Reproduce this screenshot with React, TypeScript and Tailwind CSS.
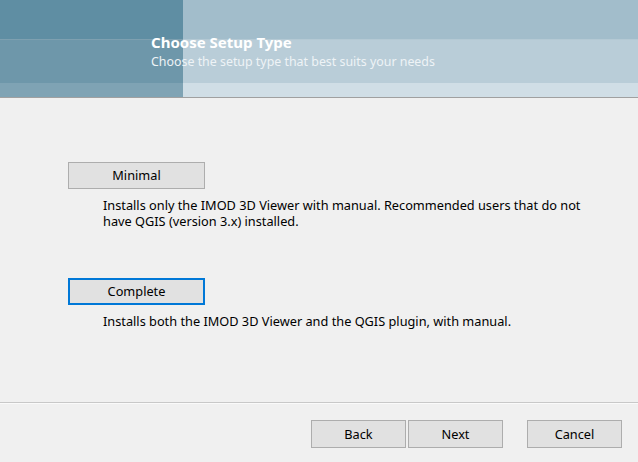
import React from 'react';

const font = { fontFamily: '"Noto Sans", "Open Sans", Arial, sans-serif' };

const App: React.FC = () => {
  return (
    <div
      className="w-[638px] h-[462px] bg-[#f0f0f0] flex flex-col overflow-hidden select-none text-black"
      style={font}
    >
      {/* Header banner */}
      <div className="relative h-[97px] flex shrink-0">
        <div className="w-[183px] flex flex-col">
          <div className="h-[39px] bg-[#5f8ea3]" />
          <div className="h-[1px] bg-[#7ea0b0]" />
          <div className="h-[43px] bg-[#6e97aa]" />
          <div className="h-[14px] bg-[#7fa3b4]" />
        </div>
        <div className="flex-1 flex flex-col">
          <div className="h-[39px] bg-[#a2bdcb]" />
          <div className="h-[1px] bg-[#b4c9d4]" />
          <div className="h-[43px] bg-[#b9cdd8]" />
          <div className="h-[14px] bg-[#d0dee6]" />
        </div>
        <div className="absolute left-[151px] top-[33px] flex flex-col">
          <span className="text-[15px] font-bold text-white leading-[19px]">Choose Setup Type</span>
          <span className="text-[12.4px] text-[#eef3f6] leading-[17px] mt-[1px]">
            Choose the setup type that best suits your needs
          </span>
        </div>
      </div>
      <div className="h-[1px] bg-[#a0a0a0] shrink-0" />

      {/* Body */}
      <div className="flex-1 flex flex-col pl-[68px] pt-[64px]">
        <button className="w-[137px] h-[27px] bg-[#e1e1e1] border border-[#adadad] text-[12.75px] leading-none">
          Minimal
        </button>
        <p className="ml-[35px] mt-[8px] w-[490px] text-[12.75px] leading-[16px]">
          Installs only the IMOD 3D Viewer with manual. Recommended users that do not have QGIS (version 3.x) installed.
        </p>

        <button className="mt-[49px] w-[137px] h-[27px] bg-[#e1e1e1] border-2 border-[#0078d7] text-[12.75px] leading-none">
          Complete
        </button>
        <p className="ml-[35px] mt-[8px] text-[12.75px] leading-[16px]">
          Installs both the IMOD 3D Viewer and the QGIS plugin, with manual.
        </p>
      </div>

      {/* Footer */}
      <div className="h-[1px] bg-[#c8c8c8] shrink-0" />
      <div className="h-[1px] bg-[#fafafa] shrink-0" />
      <div className="h-[58px] shrink-0 flex items-start pt-[16px] pl-[311px]">
        <button className="w-[95px] h-[28px] bg-[#e1e1e1] border border-[#adadad] text-[12.75px] leading-none">
          Back
        </button>
        <button className="ml-[2px] w-[95px] h-[28px] bg-[#e1e1e1] border border-[#adadad] text-[12.75px] leading-none">
          Next
        </button>
        <button className="ml-[24px] w-[95px] h-[28px] bg-[#e1e1e1] border border-[#adadad] text-[12.75px] leading-none">
          Cancel
        </button>
      </div>
    </div>
  );
};

export default App;
